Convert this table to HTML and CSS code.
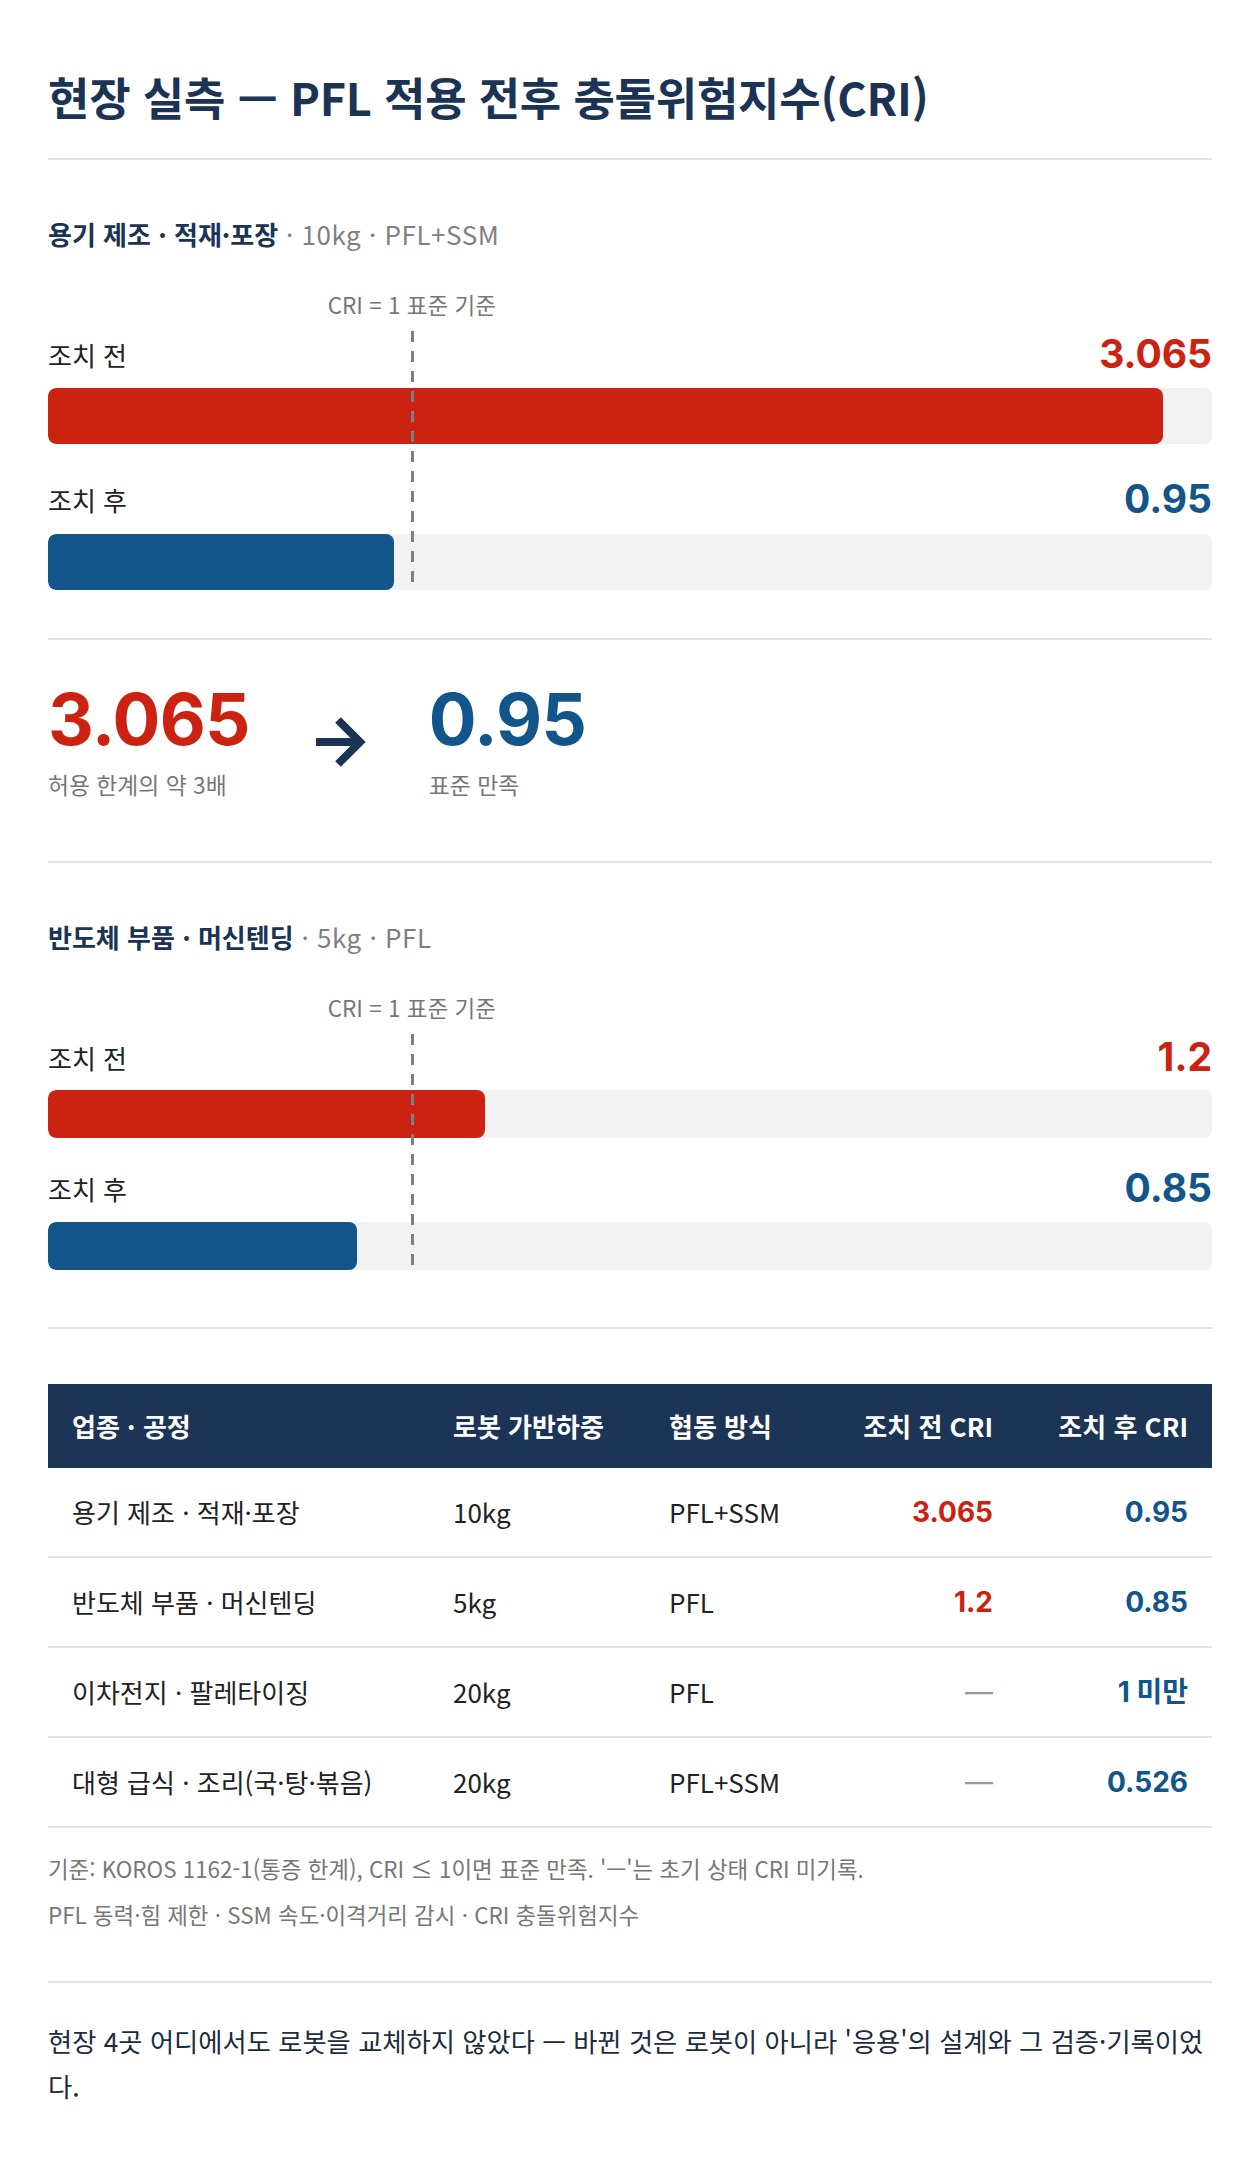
FILE: index.html
```html
<!DOCTYPE html>
<html lang="ko">
<head>
<meta charset="utf-8">
<title>현장 실측 — PFL 적용 전후 충돌위험지수(CRI)</title>
<link rel="stylesheet" href="styles.css">
</head>
<body>
<main class="page">
  <h1 class="title">현장 실측 — PFL 적용 전후 충돌위험지수(CRI)</h1>

  <section class="chart chart--large">
    <h2 class="chart-heading"><strong>용기 제조 · 적재·포장</strong><span class="meta"> · 10kg · PFL+SSM</span></h2>
    <div class="scale-label"><span>CRI = 1 표준 기준</span></div>
    <div class="bars">
      <div class="ref-line"></div>
      <div class="bar-row">
        <div class="bar-head"><span class="bar-label">조치 전</span><span class="bar-value red">3.065</span></div>
        <div class="track"><div class="fill fill--red" style="width: 95.78%"></div></div>
      </div>
      <div class="bar-row">
        <div class="bar-head"><span class="bar-label">조치 후</span><span class="bar-value blue">0.95</span></div>
        <div class="track"><div class="fill fill--blue" style="width: 29.69%"></div></div>
      </div>
    </div>
  </section>

  <section class="summary">
    <div class="stat">
      <div class="stat-num red">3.065</div>
      <div class="stat-sub">허용 한계의 약 3배</div>
    </div>
    <svg class="arrow" width="50" height="50" viewBox="0 0 50 50" aria-hidden="true">
      <path d="M0 25 H44 M22 3 L44 25 L22 47" fill="none" stroke="#1b3354" stroke-width="8" stroke-linejoin="miter"/>
    </svg>
    <div class="stat">
      <div class="stat-num blue">0.95</div>
      <div class="stat-sub">표준 만족</div>
    </div>
  </section>

  <section class="chart chart--compact">
    <h2 class="chart-heading"><strong>반도체 부품 · 머신텐딩</strong><span class="meta"> · 5kg · PFL</span></h2>
    <div class="scale-label"><span>CRI = 1 표준 기준</span></div>
    <div class="bars">
      <div class="ref-line"></div>
      <div class="bar-row">
        <div class="bar-head"><span class="bar-label">조치 전</span><span class="bar-value red">1.2</span></div>
        <div class="track"><div class="fill fill--red" style="width: 37.5%"></div></div>
      </div>
      <div class="bar-row">
        <div class="bar-head"><span class="bar-label">조치 후</span><span class="bar-value blue">0.85</span></div>
        <div class="track"><div class="fill fill--blue" style="width: 26.56%"></div></div>
      </div>
    </div>
  </section>

  <table class="data">
    <colgroup>
      <col class="c1"><col class="c2"><col class="c3"><col class="c4"><col class="c5">
    </colgroup>
    <thead>
      <tr>
        <th>업종 · 공정</th>
        <th>로봇 가반하중</th>
        <th>협동 방식</th>
        <th class="right">조치 전 CRI</th>
        <th class="right">조치 후 CRI</th>
      </tr>
    </thead>
    <tbody>
      <tr>
        <td>용기 제조 · 적재·포장</td><td>10kg</td><td>PFL+SSM</td>
        <td class="right val red">3.065</td><td class="right val blue">0.95</td>
      </tr>
      <tr>
        <td>반도체 부품 · 머신텐딩</td><td>5kg</td><td>PFL</td>
        <td class="right val red">1.2</td><td class="right val blue">0.85</td>
      </tr>
      <tr>
        <td>이차전지 · 팔레타이징</td><td>20kg</td><td>PFL</td>
        <td class="right val dash">—</td><td class="right val blue">1 미만</td>
      </tr>
      <tr>
        <td>대형 급식 · 조리(국·탕·볶음)</td><td>20kg</td><td>PFL+SSM</td>
        <td class="right val dash">—</td><td class="right val blue">0.526</td>
      </tr>
    </tbody>
  </table>

  <div class="notes">
    <p>기준: KOROS 1162-1(통증 한계), CRI ≤ 1이면 표준 만족. '—'는 초기 상태 CRI 미기록.</p>
    <p>PFL 동력·힘 제한 · SSM 속도·이격거리 감시 · CRI 충돌위험지수</p>
  </div>

  <p class="closing">현장 4곳 어디에서도 로봇을 교체하지 않았다 — 바뀐 것은 로봇이 아니라 '응용'의 설계와 그 검증·기록이었다.</p>
</main>
</body>
</html>
```

FILE: styles.css
```css
* {
  box-sizing: border-box;
}

body {
  margin: 0;
  background: #ffffff;
  font-family: "Noto Sans CJK KR", "Noto Sans", sans-serif;
  color: #222222;
}

.page {
  padding: 68px 48px 64px;
}

.title {
  margin: 0;
  padding-bottom: 32px;
  border-bottom: 2px solid #e3e3e3;
  font-size: 45px;
  line-height: 58px;
  font-weight: 700;
  color: #1b3354;
  letter-spacing: -0.005em;
}

.red { color: #cc2211; }
.blue { color: #12558a; }

/* ---------- bar charts ---------- */
.chart {
  border-bottom: 2px solid #e3e3e3;
}

.chart--large {
  padding: 56px 0 48px;
}

.chart--compact {
  padding: 56px 0 57px;
}

.chart-heading {
  margin: 0;
  font-size: 26px;
  line-height: 36px;
  font-weight: 400;
}

.chart-heading strong {
  font-weight: 700;
  color: #1b3354;
}

.chart-heading .meta {
  color: #808080;
  letter-spacing: 0.02em;
}

.scale-label {
  margin-top: 37px;
  height: 30px;
  font-size: 22.5px;
  line-height: 30px;
  color: #777777;
}

.scale-label span {
  display: inline-block;
  margin-left: 31.25%;
  transform: translateX(-50%);
  white-space: nowrap;
}

.bars {
  position: relative;
  margin-top: 12px;
}

.ref-line {
  position: absolute;
  top: 0;
  bottom: 0;
  left: 31.25%;
  width: 3px;
  margin-left: -1px;
  background: repeating-linear-gradient(to bottom, #7b8088 0 11px, transparent 11px 20px);
  z-index: 2;
}

.bar-head {
  display: flex;
  justify-content: space-between;
  align-items: center;
  height: 46px;
}

.bar-label {
  font-size: 26px;
  color: #222222;
}

.bar-value {
  font-family: Inter, "Liberation Sans", sans-serif;
  font-weight: 700;
  font-size: 39px;
  line-height: 46px;
}

.track {
  background: #f2f2f2;
  border-radius: 8px;
  overflow: hidden;
}

.fill {
  height: 100%;
  border-radius: 8px;
}

.fill--red { background: #cc2211; }
.fill--blue { background: #12558a; }

.chart--large .track {
  height: 56px;
  margin-top: 11px;
}

.chart--large .bar-row + .bar-row {
  margin-top: 32px;
}

.chart--large .bar-row + .bar-row .track {
  margin-top: 12px;
}

.chart--compact .bar-head {
  margin-top: 1px;
}

.chart--compact .track {
  height: 48px;
  margin-top: 10px;
}

.chart--compact .bar-row + .bar-row {
  margin-top: 27px;
}

.chart--compact .bar-row + .bar-row .track {
  margin-top: 11px;
}

/* ---------- summary ---------- */
.summary {
  display: flex;
  align-items: center;
  gap: 63px;
  padding: 43px 0 61px;
  border-bottom: 2px solid #e3e3e3;
}

.stat-num {
  font-family: Inter, "Liberation Sans", sans-serif;
  font-weight: 700;
  font-size: 71px;
  line-height: 72px;
  letter-spacing: -0.01em;
}

.stat-sub {
  margin-top: 15px;
  font-size: 22.8px;
  line-height: 30px;
  color: #777777;
}

.arrow {
  flex: none;
  display: block;
  margin-left: 3px;
}

/* ---------- table ---------- */
.data {
  width: 100%;
  margin-top: 55px;
  border-collapse: collapse;
  table-layout: fixed;
}

.c1 { width: 381px; }
.c2 { width: 216px; }
.c3 { width: 166px; }
.c4 { width: 206px; }
.c5 { width: 195px; }

.data th {
  background: #1c3455;
  color: #ffffff;
  font-size: 26px;
  line-height: 36px;
  font-weight: 700;
  text-align: left;
  padding: 24px 24px;
  white-space: nowrap;
}

.data td {
  padding: 26px 24px;
  font-size: 26px;
  line-height: 36px;
  color: #222222;
  border-bottom: 2px solid #e3e3e3;
  white-space: nowrap;
}

.data .right {
  text-align: right;
}

.data td.val {
  font-family: Inter, "Noto Sans CJK KR", sans-serif;
  font-weight: 700;
  font-size: 28px;
}

.data td.red { color: #cc2211; }
.data td.blue { color: #12558a; }

.data td.dash {
  color: #999999;
  font-weight: 400;
}

/* ---------- notes ---------- */
.notes {
  padding: 25px 0 52px;
  border-bottom: 2px solid #e3e3e3;
}

.notes p {
  margin: 0;
  font-size: 22.4px;
  line-height: 30px;
  color: #777777;
}

.notes p + p {
  margin-top: 16px;
}

.closing {
  margin: 0;
  padding-top: 35px;
  font-size: 26.3px;
  line-height: 45px;
  color: #1c2b3f;
}
```
